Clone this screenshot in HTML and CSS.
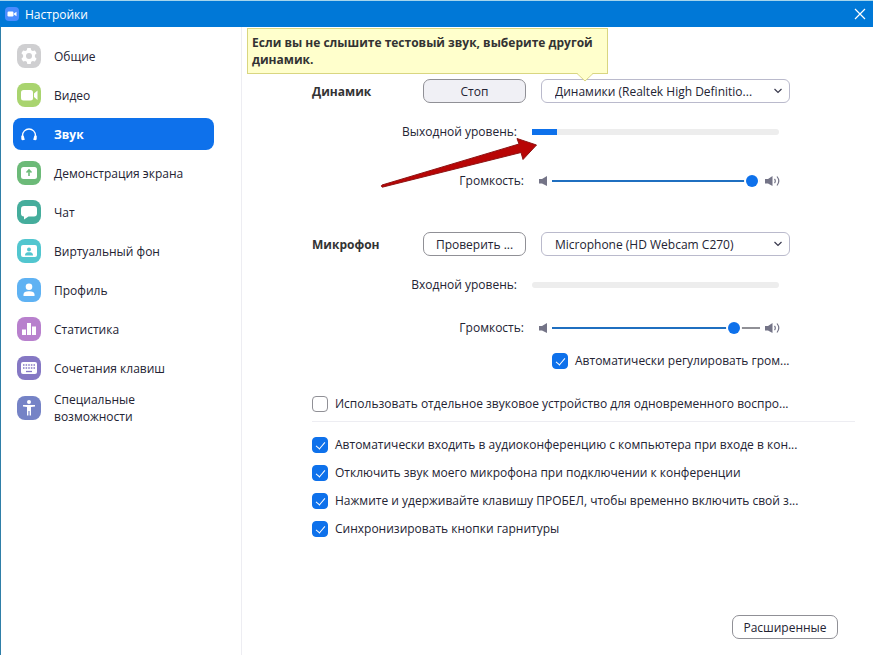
FILE: index.html
```html
<!DOCTYPE html>
<html lang="ru">
<head>
    <meta charset="UTF-8">
    <meta name="viewport" content="width=device-width, initial-scale=1.0">
    <title>Настройки</title>
    <link rel="stylesheet" href="styles.css">
</head>
<body>
    <header class="titlebar">
        <svg class="app-icon" viewBox="0 0 14 14">
            <rect width="14" height="14" rx="4" fill="#4a8cff"/>
            <rect x="2.5" y="4.5" width="6" height="5" rx="1.2" fill="#fff"/>
            <path d="M9 6.5l2.5-1.7v4.4L9 7.5z" fill="#fff"/>
        </svg>
        <h1 class="title">Настройки</h1>
        <button class="close" aria-label="Закрыть">
            <svg width="12" height="12" viewBox="0 0 12 12"><path d="M1 1l10 10M11 1L1 11" stroke="#fff" stroke-width="1.2"/></svg>
        </button>
    </header>

    <div class="window">
        <nav class="sidebar">
            <a class="item" href="#general">
                <svg class="icon" viewBox="0 0 24 24">
                    <rect width="24" height="24" rx="8" fill="#cfcfd1"/>
                    <path d="M10.3 4h3.4l.5 2.2 1.5.9 2.2-.7 1.7 2.9-1.7 1.6v2.2l1.7 1.6-1.7 2.9-2.2-.7-1.5.9-.5 2.2h-3.4l-.5-2.2-1.5-.9-2.2.7-1.7-2.9 1.7-1.6v-2.2L4.4 9.3l1.7-2.9 2.2.7 1.5-.9z" fill="#fff"/>
                    <circle cx="12" cy="12" r="3" fill="#cfcfd1"/>
                </svg>
                <span>Общие</span>
            </a>
            <a class="item" href="#video">
                <svg class="icon" viewBox="0 0 24 24">
                    <rect width="24" height="24" rx="8" fill="#a9d46f"/>
                    <rect x="4" y="7" width="12" height="10.5" rx="2.5" fill="#fff"/>
                    <path d="M17 10.5l3.5-3v9.5L17 14z" fill="#fff"/>
                </svg>
                <span>Видео</span>
            </a>
            <a class="item active" href="#audio" aria-current="page">
                <svg class="icon" viewBox="0 0 24 24">
                    <path d="M5.5 15.5v-2a6.5 6.5 0 0 1 13 0v2" fill="none" stroke="#fff" stroke-width="1.3"/>
                    <path d="M4.3 13.8l2.3-.4 1.2 4.4-2 .5a1.5 1.5 0 0 1-1.5-1.3zM19.7 13.8l-2.3-.4-1.2 4.4 2 .5a1.5 1.5 0 0 0 1.5-1.3z" fill="#fff"/>
                </svg>
                <span>Звук</span>
            </a>
            <a class="item" href="#share">
                <svg class="icon" viewBox="0 0 24 24">
                    <rect width="24" height="24" rx="8" fill="#6cba78"/>
                    <rect x="4" y="6" width="16" height="12" rx="2.5" fill="#fff"/>
                    <path d="M12 15v-5M9.5 11.5L12 9l2.5 2.5" fill="none" stroke="#6cba78" stroke-width="1.6"/>
                </svg>
                <span>Демонстрация экрана</span>
            </a>
            <a class="item" href="#chat">
                <svg class="icon" viewBox="0 0 24 24">
                    <rect width="24" height="24" rx="8" fill="#45ad9c"/>
                    <path d="M7 6h10a3 3 0 0 1 3 3v4.5a3 3 0 0 1-3 3h-5.5L7 19.5v-3a3 3 0 0 1-3-3V9a3 3 0 0 1 3-3z" fill="#fff"/>
                </svg>
                <span>Чат</span>
            </a>
            <a class="item" href="#background">
                <svg class="icon" viewBox="0 0 24 24">
                    <rect width="24" height="24" rx="8" fill="#52c6cf"/>
                    <rect x="4" y="6" width="16" height="12" rx="2" fill="#fff"/>
                    <circle cx="12" cy="10.5" r="2" fill="#52c6cf"/>
                    <path d="M8 16.5c0-3 2-3.3 4-3.3s4 .3 4 3.3z" fill="#52c6cf"/>
                </svg>
                <span>Виртуальный фон</span>
            </a>
            <a class="item" href="#profile">
                <svg class="icon" viewBox="0 0 24 24">
                    <rect width="24" height="24" rx="8" fill="#5fb2f3"/>
                    <circle cx="12" cy="8.8" r="3.3" fill="#fff"/>
                    <path d="M6.5 18v-1.5c0-2.4 2-3.3 5.5-3.3s5.5.9 5.5 3.3V18z" fill="#fff"/>
                </svg>
                <span>Профиль</span>
            </a>
            <a class="item" href="#statistics">
                <svg class="icon" viewBox="0 0 24 24">
                    <rect width="24" height="24" rx="8" fill="#b880cd"/>
                    <path d="M5 12.5h4V18H5zM10 6h4v12h-4zM15 9.5h4V18h-4z" fill="#fff"/>
                </svg>
                <span>Статистика</span>
            </a>
            <a class="item" href="#shortcuts">
                <svg class="icon" viewBox="0 0 24 24">
                    <rect width="24" height="24" rx="8" fill="#8578c4"/>
                    <rect x="4" y="6" width="16" height="12" rx="2" fill="#fff"/>
                    <path d="M6 9h12M6 12h12" stroke="#8578c4" stroke-width="1.5" stroke-dasharray="1.5 1.125"/>
                    <path d="M9 15.5h6" stroke="#8578c4" stroke-width="1.3"/>
                </svg>
                <span>Сочетания клавиш</span>
            </a>
            <a class="item" href="#accessibility">
                <svg class="icon" viewBox="0 0 24 24">
                    <rect width="24" height="24" rx="8" fill="#7583c6"/>
                    <circle cx="12" cy="6" r="2" fill="#fff"/>
                    <path d="M6 9h12v1.4l-4 .6v8.5h-1.4V15h-1.2v4.5H10V11l-4-.6z" fill="#fff"/>
                </svg>
                <span>Специальные возможности</span>
            </a>
        </nav>

        <main class="content">
            <div class="tooltip" role="tooltip">
                Если вы не слышите тестовый звук, выберите другой динамик.
                <svg class="tail" width="18" height="9" viewBox="0 0 18 9"><path d="M0 0h1l8 8 8-8h1" fill="#ffffcc"/><path d="M1 .5l8 7.5 8-7.5" fill="none" stroke="#d9d681"/></svg>
            </div>

            <section class="device">
                <div class="row device-row">
                    <h2 class="heading">Динамик</h2>
                    <button class="button pressed">Стоп</button>
                    <div class="dropdown">
                        <select aria-label="Динамик">
                            <option>Динамики (Realtek High Definitio...</option>
                        </select>
                        <svg class="chevron" width="8" height="6" viewBox="0 0 8 6"><path d="M.5 1L4 4.5 7.5 1" fill="none" stroke="#39394d" stroke-width="1.2"/></svg>
                    </div>
                </div>
                <div class="row level-row">
                    <span class="level-label" id="output-level">Выходной уровень:</span>
                    <div class="level" role="meter" aria-labelledby="output-level" aria-valuenow="10">
                        <div class="level-fill" style="width: 10%"></div>
                    </div>
                </div>
                <div class="row volume-row">
                    <label class="volume-label" for="speaker-volume">Громкость:</label>
                    <div class="volume">
                        <svg class="quiet" width="8" height="10" viewBox="0 0 8 10"><path d="M0 3h3l5-3v10L3 7.5H0z" fill="#747487"/></svg>
                        <input type="range" id="speaker-volume" min="0" max="100" value="99" style="--value: 99%">
                        <svg class="loud" width="15" height="12" viewBox="0 0 15 12"><path d="M0 4h3l4.5-3v10L3 8.5H0z" fill="#747487"/><path d="M9.5 3.8q1.6 2.2 0 4.4M12 1.5q3.6 4.5 0 9" fill="none" stroke="#747487" stroke-width="1.2"/></svg>
                    </div>
                </div>
            </section>

            <section class="device microphone">
                <div class="row device-row">
                    <h2 class="heading">Микрофон</h2>
                    <button class="button">Проверить ...</button>
                    <div class="dropdown">
                        <select aria-label="Микрофон">
                            <option>Microphone (HD Webcam C270)</option>
                        </select>
                        <svg class="chevron" width="8" height="6" viewBox="0 0 8 6"><path d="M.5 1L4 4.5 7.5 1" fill="none" stroke="#39394d" stroke-width="1.2"/></svg>
                    </div>
                </div>
                <div class="row level-row">
                    <span class="level-label" id="input-level">Входной уровень:</span>
                    <div class="level" role="meter" aria-labelledby="input-level" aria-valuenow="0"></div>
                </div>
                <div class="row volume-row">
                    <label class="volume-label" for="mic-volume">Громкость:</label>
                    <div class="volume">
                        <svg class="quiet" width="8" height="10" viewBox="0 0 8 10"><path d="M0 3h3l5-3v10L3 7.5H0z" fill="#747487"/></svg>
                        <input type="range" id="mic-volume" min="0" max="100" value="90" style="--value: 90%">
                        <svg class="loud" width="15" height="12" viewBox="0 0 15 12"><path d="M0 4h3l4.5-3v10L3 8.5H0z" fill="#747487"/><path d="M9.5 3.8q1.6 2.2 0 4.4M12 1.5q3.6 4.5 0 9" fill="none" stroke="#747487" stroke-width="1.2"/></svg>
                    </div>
                </div>
                <label class="check auto-volume"><input type="checkbox" checked>Автоматически регулировать гром...</label>
            </section>

            <label class="check separate"><input type="checkbox">Использовать отдельное звуковое устройство для одновременного воспро...</label>

            <div class="options">
                <label class="check"><input type="checkbox" checked>Автоматически входить в аудиоконференцию с компьютера при входе в кон...</label>
                <label class="check"><input type="checkbox" checked>Отключить звук моего микрофона при подключении к конференции</label>
                <label class="check"><input type="checkbox" checked>Нажмите и удерживайте клавишу ПРОБЕЛ, чтобы временно включить свой з...</label>
                <label class="check"><input type="checkbox" checked>Синхронизировать кнопки гарнитуры</label>
            </div>

            <button class="button advanced">Расширенные</button>

            <svg class="arrow" width="160" height="52" viewBox="0 0 160 52">
                <path d="M2 48L139 7l-2-5.5L156.5 8 143 22.5l-2-7L3 50a1 1 0 0 1-1-2z" fill="#b80505" stroke="#8c1414" stroke-linejoin="round"/>
            </svg>
        </main>
    </div>
</body>
</html>
```
FILE: styles.css
```css
* {
    margin: 0;
    padding: 0;
    box-sizing: border-box;
}

body {
    min-height: 100vh;
    display: flex;
    flex-direction: column;
    background: #fff;
    color: #232333;
    font: 12px/17px "Open Sans", "Noto Sans", sans-serif;
}

button, select {
    font: inherit;
    color: inherit;
}

.titlebar {
    height: 27px;
    display: flex;
    align-items: center;
    gap: 6px;
    padding: 0 7px 0 5px;
    background: #0078d7;
    border-top: 1px solid #a5d5ec;
    color: #fff;
}

.app-icon {
    width: 14px;
    height: 14px;
}

.title {
    flex: 1;
    font-size: 12px;
    font-weight: normal;
}

.close {
    display: flex;
    border: none;
    background: none;
}

.window {
    flex: 1;
    display: flex;
    border-left: 1px solid #2f7fa8;
}

.sidebar {
    width: 241px;
    flex-shrink: 0;
    display: flex;
    flex-direction: column;
    gap: 7px;
    padding: 13px 27px 13px 12px;
    border-right: 1px solid #ededf2;
}

.item {
    min-height: 32px;
    display: flex;
    align-items: center;
    gap: 13px;
    padding: 0 4px;
    border-radius: 8px;
    color: inherit;
    text-decoration: none;
}

.item:last-child {
    padding-right: 40px;
}

.item.active {
    background: #0e71eb;
    color: #fff;
    font-weight: bold;
}

.icon {
    width: 24px;
    height: 24px;
    flex-shrink: 0;
}

.content {
    position: relative;
    flex: 1;
    min-width: 0;
    display: flex;
    flex-direction: column;
    padding: 52px 18px 16px 70px;
}

.tooltip {
    position: absolute;
    z-index: 1;
    top: 1px;
    left: 5px;
    width: 361px;
    padding: 5px 4px;
    background: #ffffcc;
    border: 1px solid #d9d681;
    color: #333;
    font-weight: bold;
}

.tail {
    position: absolute;
    top: 100%;
    left: 328px;
}

.row {
    display: flex;
    align-items: center;
}

.device {
    max-width: 478px;
}

.microphone {
    margin-top: 43px;
}

.device-row {
    gap: 15px;
}

.heading {
    width: 96px;
    font-size: 12px;
    color: #333;
}

.button {
    width: 103px;
    height: 24px;
    border: 1px solid #909096;
    border-radius: 7px;
    background: #fff;
}

.pressed {
    background: #f0f0f5;
}

.dropdown {
    position: relative;
    flex: 1;
}

.dropdown select {
    width: 100%;
    height: 24px;
    padding: 0 24px 0 13px;
    appearance: none;
    border: 1px solid #babacc;
    border-radius: 6px;
    background: #fff;
}

.chevron {
    position: absolute;
    top: 9px;
    right: 8px;
    pointer-events: none;
}

.level-row {
    gap: 15px;
    margin-top: 20px;
    padding-right: 11px;
}

.level-label {
    width: 205px;
    text-align: right;
}

.level {
    flex: 1;
    height: 6px;
    border-radius: 3px;
    background: #ededed;
}

.level-fill {
    height: 100%;
    background: #0e71eb;
}

.volume-row {
    gap: 15px;
    margin-top: 32px;
    padding-right: 10px;
}

.microphone .volume-row {
    margin-top: 26px;
}

.volume-label {
    width: 212px;
    text-align: right;
}

.volume {
    flex: 1;
    display: flex;
    align-items: center;
}

.volume input {
    flex: 1;
    min-width: 0;
    height: 16px;
    margin: 0 5px;
    appearance: none;
    background: none;
}

.volume input::-webkit-slider-runnable-track {
    height: 2px;
    background: linear-gradient(to right, #1f6fc0 var(--value), #909096 var(--value));
}

.volume input::-webkit-slider-thumb {
    width: 12px;
    height: 12px;
    margin-top: -5px;
    appearance: none;
    border-radius: 50%;
    background: #0e71eb;
    box-shadow: 0 0 0 2px #fff;
}

.check {
    display: flex;
    align-items: center;
    gap: 7px;
    white-space: nowrap;
}

.check input {
    position: relative;
    width: 16px;
    height: 16px;
    flex-shrink: 0;
    appearance: none;
    border: 1px solid #909096;
    border-radius: 4px;
}

.check input:checked {
    border-color: #0e71eb;
    background: #0e71eb;
}

.check input:checked::after {
    content: "";
    position: absolute;
    top: 2px;
    left: 5px;
    width: 4px;
    height: 8px;
    border: solid #fff;
    border-width: 0 1px 1px 0;
    transform: rotate(40deg);
}

.auto-volume {
    margin: 16px 0 0 240px;
}

.separate {
    margin-top: 26px;
    padding-bottom: 9px;
    border-bottom: 1px solid #ededf2;
}

.options {
    display: flex;
    flex-direction: column;
    gap: 11px;
    margin-top: 14px;
}

.advanced {
    width: 106px;
    margin: auto 17px 0 auto;
}

.arrow {
    position: absolute;
    top: 110px;
    left: 138px;
    pointer-events: none;
}
```
